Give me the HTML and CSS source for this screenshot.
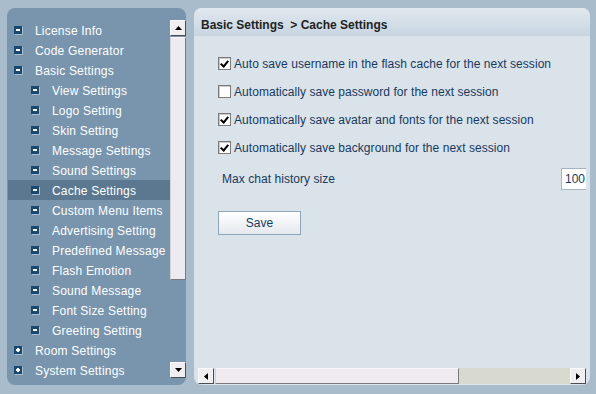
FILE: index.html
```html
<!DOCTYPE html>
<html lang="en">
<head>
  <meta charset="UTF-8" />
  <meta name="viewport" content="width=device-width, initial-scale=1.0" />
  <title>Cache Settings</title>
  <link rel="stylesheet" href="styles.css">
</head>
<body>
  <div class="app">
    <aside class="nav">
      <ul class="tree">
        <li class="item"><span class="node"></span><span class="label">License Info</span></li>
        <li class="item"><span class="node"></span><span class="label">Code Generator</span></li>
        <li class="item"><span class="node"></span><span class="label">Basic Settings</span></li>
        <li class="item sub"><span class="node"></span><span class="label">View Settings</span></li>
        <li class="item sub"><span class="node"></span><span class="label">Logo Setting</span></li>
        <li class="item sub"><span class="node"></span><span class="label">Skin Setting</span></li>
        <li class="item sub"><span class="node"></span><span class="label">Message Settings</span></li>
        <li class="item sub"><span class="node"></span><span class="label">Sound Settings</span></li>
        <li class="item sub active"><span class="node"></span><span class="label">Cache Settings</span></li>
        <li class="item sub"><span class="node"></span><span class="label">Custom Menu Items</span></li>
        <li class="item sub"><span class="node"></span><span class="label">Advertising Setting</span></li>
        <li class="item sub"><span class="node"></span><span class="label">Predefined Message</span></li>
        <li class="item sub"><span class="node"></span><span class="label">Flash Emotion</span></li>
        <li class="item sub"><span class="node"></span><span class="label">Sound Message</span></li>
        <li class="item sub"><span class="node"></span><span class="label">Font Size Setting</span></li>
        <li class="item sub"><span class="node"></span><span class="label">Greeting Setting</span></li>
        <li class="item"><span class="node plus"></span><span class="label">Room Settings</span></li>
        <li class="item"><span class="node plus"></span><span class="label">System Settings</span></li>
      </ul>
      <div class="vscroll">
        <div class="sbtn"><svg width="7" height="4"><path d="M0 4h7L3.5 0z"/></svg></div>
        <div class="vthumb"></div>
        <div class="spacer"></div>
        <div class="sbtn"><svg width="7" height="4"><path d="M0 0h7L3.5 4z"/></svg></div>
      </div>
    </aside>

    <main class="panel">
      <div class="panel-head">Basic Settings&nbsp; &gt; Cache Settings</div>
      <div class="panel-body">
        <div class="view">
          <div class="form">
            <label class="check"><span class="box on"></span>Auto save username in the flash cache for the next session</label>
            <label class="check"><span class="box"></span>Automatically save password for the next session</label>
            <label class="check"><span class="box on"></span>Automatically save avatar and fonts for the next session</label>
            <label class="check"><span class="box on"></span>Automatically save background for the next session</label>
            <div class="limit">
              <span>Max chat history size</span>
              <input class="num" type="text" value="100">
            </div>
            <button class="save">Save</button>
          </div>
        </div>
        <div class="hscroll">
          <div class="sbtn"><svg width="4" height="7"><path d="M4 0v7L0 3.5z"/></svg></div>
          <div class="hthumb"></div>
          <div class="htrack"></div>
          <div class="sbtn"><svg width="4" height="7"><path d="M0 0v7L4 3.5z"/></svg></div>
        </div>
      </div>
    </main>
  </div>
</body>
</html>
```

FILE: styles.css
```css
body {
  margin: 0;
  background: #a9bccb;
  font-family: "Liberation Sans", Arial, sans-serif;
  font-size: 12px;
}
.app {
  display: flex;
  gap: 8px;
  padding: 8px 0 0 7px;
}
.nav {
  width: 179px;
  height: 377px;
  box-sizing: border-box;
  padding: 12px 0 5px 1px;
  background: #7895ad;
  border-radius: 8px;
  display: flex;
}
.tree {
  list-style: none;
  margin: 0;
  padding: 0;
  width: 162px;
}
.item {
  height: 20px;
  display: flex;
  align-items: center;
  padding-left: 6px;
  color: #fff;
  letter-spacing: 0.2px;
  white-space: nowrap;
}
.item.sub {
  padding-left: 23px;
}
.item.active {
  background: #5b7890;
}
.label {
  position: relative;
  top: 1px;
}
.node {
  position: relative;
  flex: none;
  width: 8px;
  height: 8px;
  margin-right: 13px;
  background: #1c4870;
  box-shadow: 1px 1px 0 #a9bfd1;
}
.node::before {
  content: "";
  position: absolute;
  left: 2px;
  top: 3px;
  width: 4px;
  height: 2px;
  background: #fff;
}
.node.plus::after {
  content: "";
  position: absolute;
  left: 3px;
  top: 2px;
  width: 2px;
  height: 4px;
  background: #fff;
}
.vscroll {
  width: 16px;
  display: flex;
  flex-direction: column;
  padding-bottom: 2px;
}
.sbtn {
  flex: none;
  width: 16px;
  height: 16px;
  box-sizing: border-box;
  display: flex;
  align-items: center;
  justify-content: center;
  background: #f1eef1;
  border: 1px solid;
  border-color: #fbfafb #4e4e4e #4e4e4e #fbfafb;
}
.sbtn svg {
  fill: #000;
}
.vthumb {
  height: 243px;
  margin-top: 1px;
  box-sizing: border-box;
  background: #efeaf0;
  border: 1px solid;
  border-color: #f8f6f8 #7a7a7a #7a7a7a #d6d3d8;
}
.spacer {
  flex: 1;
}
.panel {
  width: 396px;
  height: 377px;
  background: #dae2ea;
  border-radius: 8px;
  display: flex;
  flex-direction: column;
  overflow: hidden;
}
.panel-head {
  height: 28px;
  box-sizing: border-box;
  padding: 10px 0 0 7px;
  line-height: 14px;
  background: linear-gradient(#e1e8ef, #c7d5e1);
  color: #222;
  font-weight: bold;
}
.panel-body {
  flex: 1;
  display: flex;
  flex-direction: column;
  padding: 0 4px 1px;
  min-height: 0;
}
.view {
  flex: 1;
  overflow: hidden;
}
.form {
  width: 400px;
  padding: 14px 0 0 20px;
  color: #173a5e;
  letter-spacing: 0.05px;
}
.check {
  height: 28px;
  display: flex;
  align-items: center;
  white-space: nowrap;
}
.box {
  flex: none;
  position: relative;
  top: -1px;
  width: 13px;
  height: 13px;
  box-sizing: border-box;
  margin-right: 3px;
  background: #fff;
  border: 1px solid #7c7c7c;
  box-shadow: inset 1px 1px 0 #c9c9c9;
}
.box.on::after {
  content: "";
  position: absolute;
  left: 3px;
  top: 1px;
  width: 3px;
  height: 6px;
  border: solid #000;
  border-width: 0 2px 2px 0;
  transform: rotate(40deg);
}
.limit {
  width: 383px;
  height: 22px;
  box-sizing: border-box;
  margin-top: 6px;
  padding-left: 4px;
  display: flex;
  align-items: center;
}
.num {
  margin-left: auto;
  width: 40px;
  height: 22px;
  box-sizing: border-box;
  padding: 0 0 0 3px;
  border: 1px solid #a6b5c4;
  background: #fff;
  color: #173a5e;
  font: 12px "Liberation Sans", Arial, sans-serif;
}
.save {
  display: block;
  margin-top: 21px;
  width: 83px;
  height: 24px;
  border: 1px solid #8ea4b8;
  background: linear-gradient(#ffffff, #e4e9ee);
  color: #173a5e;
  font: 12px "Liberation Sans", Arial, sans-serif;
}
.hscroll {
  height: 16px;
  display: flex;
}
.hthumb {
  width: 244px;
  margin-left: 1px;
  box-sizing: border-box;
  background: #efeaf0;
  border: 1px solid;
  border-color: #f8f6f8 #7a7a7a #7a7a7a #d6d3d8;
}
.htrack {
  flex: 1;
  background: #d8d9cf;
}
```
